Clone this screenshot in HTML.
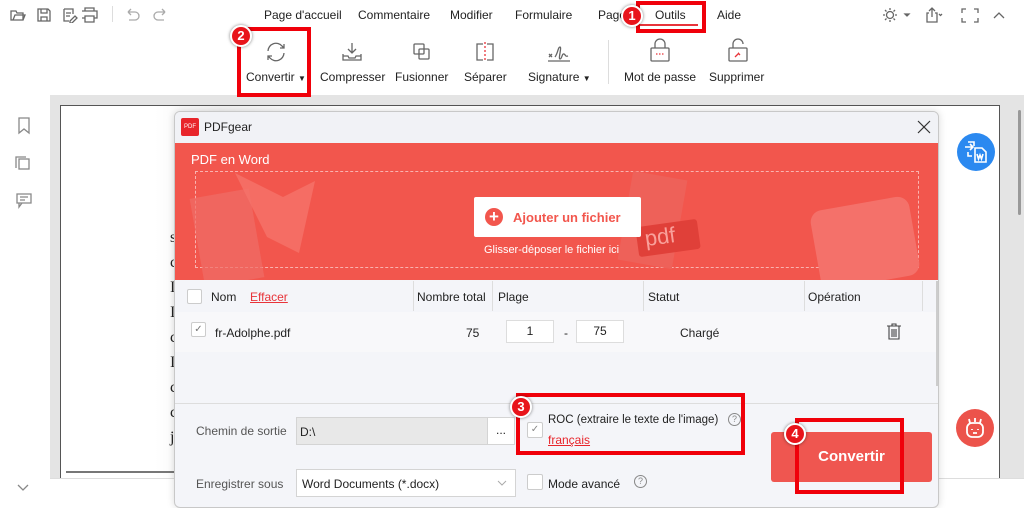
<!DOCTYPE html>
<html><head><meta charset="utf-8"><style>
*{box-sizing:border-box;margin:0;padding:0}
body{width:1024px;height:508px;overflow:hidden;position:relative;background:#e4e4e4;font-family:"Liberation Sans",sans-serif;font-size:12px;color:#222}
.a{position:absolute}
.top{left:0;top:0;width:1024px;height:95px;background:#fff}
.menu span{position:absolute;top:8px;font-size:12px}
.tool{position:absolute;top:70px;font-size:12px;color:#222}
.red{position:absolute;border:4px solid #f0000a}
.badge{position:absolute;width:22px;height:22px;border-radius:50%;background:#e8141b;border:2px solid #fff;box-shadow:0 0 3px rgba(0,0,0,.5);color:#fff;font-weight:bold;font-size:13px;text-align:center;line-height:18px}
.ic{position:absolute;stroke:#666;fill:none;stroke-width:1.3}
.chk{position:absolute;width:15px;height:15px;border:1px solid #ccc;background:#fff;border-radius:2px}
</style></head><body>
<div class="a top"></div>
<svg class="ic" style="left:10px;top:7px" width="90" height="16" viewBox="0 0 90 16">
<path d="M1 4h5l1 2h6v7H1z M3 13l2-5h10l-2 5"/>
<path d="M28 2h10l2 2v10H28z M31 2v4h6V2 M31 14v-4h6v4"/>
<path d="M54 2h9v5 M54 2v12h5 M56 6h5 M56 9h4 M60 14l5-5 2 2-5 5h-2z"/>
<path d="M84 4V1h-9v3 M72 4h15v7h-3 M75 11h-3 M75 9h9v6h-9z"/>
</svg>
<div class="a" style="left:112px;top:6px;width:1px;height:16px;background:#ddd"></div>
<svg class="ic" style="left:124px;top:7px;stroke:#aaa" width="45" height="16" viewBox="0 0 45 16"><path d="M4 5h7a4 4 0 0 1 0 8H5 M4 5l3-3 M4 5l3 3"/><path d="M41 5h-7a4 4 0 0 0 0 8h6 M41 5l-3-3 M41 5l-3 3"/></svg>
<div class="menu">
<span style="left:264px">Page d'accueil</span><span style="left:358px">Commentaire</span><span style="left:450px">Modifier</span><span style="left:515px">Formulaire</span><span style="left:598px">Page</span><span style="left:655px">Outils</span><span style="left:717px">Aide</span>
</div>
<div class="a" style="left:640px;top:24px;width:58px;height:2px;background:#e8343a"></div>
<svg class="ic" style="left:880px;top:6px" width="130" height="18" viewBox="0 0 130 18">
<circle cx="10" cy="9" r="3.5"/><path d="M10 2v2M10 14v2M3 9h2M15 9h2M5 4l1.5 1.5M13.5 12.5L15 14M5 14l1.5-1.5M13.5 5.5L15 4"/>
<path d="M25 8l2 2 2-2z" fill="#666"/>
<path d="M49 7h-2v9h10V7h-2 M52 11V2 M49 5l3-3 3 3"/><path d="M59 8l1.5 1.5L62 8"/>
<path d="M82 7V3h4 M94 3h4v4 M98 12v4h-4 M86 16h-4v-4"/>
<path d="M114 12l5-5 5 5"/>
</svg>
<svg class="ic" style="left:264px;top:40px" width="24" height="24" viewBox="0 0 24 24"><path d="M4 11a8 8 0 0 1 14-5l2 2 M20 4v4h-4 M20 13a8 8 0 0 1-14 5l-2-2 M4 20v-4h4"/></svg>
<svg class="ic" style="left:340px;top:40px" width="24" height="24" viewBox="0 0 24 24"><path d="M12 3v10 M8 9l4 4 4-4 M3 14v6h18v-6 M3 16h5l1 2h6l1-2h5"/></svg>
<svg class="ic" style="left:410px;top:40px" width="24" height="24" viewBox="0 0 24 24"><rect x="4" y="4" width="10" height="10" rx="1"/><rect x="9" y="9" width="10" height="10" rx="1"/></svg>
<svg class="ic" style="left:473px;top:40px" width="24" height="24" viewBox="0 0 24 24"><path d="M10 4H4v16h6 M14 4h6v16h-6"/><path d="M12 2v20" stroke="#e8343a" stroke-dasharray="2 2"/></svg>
<svg class="ic" style="left:546px;top:40px" width="26" height="24" viewBox="0 0 26 24"><path d="M3 14l3 3 M6 14l-3 3 M9 17c3-4 3-10 5-10s-2 12 0 12 2-6 4-5 1 3 4 2 M2 21h22"/></svg>
<div class="a" style="left:608px;top:40px;width:1px;height:44px;background:#ddd"></div>
<svg class="ic" style="left:648px;top:38px" width="24" height="26" viewBox="0 0 24 26"><path d="M7 10V6a5 5 0 0 1 10 0v4"/><rect x="3" y="10" width="18" height="13" rx="1"/><path d="M8 16h8" stroke="#e8343a" stroke-dasharray="1.5 1.5"/></svg>
<svg class="ic" style="left:726px;top:38px" width="24" height="26" viewBox="0 0 24 26"><path d="M7 10V6a5 5 0 0 1 10 0"/><rect x="3" y="10" width="18" height="13" rx="1"/><path d="M9 19l4-4 M12 15l2 2" stroke="#e8343a"/></svg>
<span class="tool" style="left:246px">Convertir <span style="font-size:8px">▼</span></span>
<span class="tool" style="left:320px">Compresser</span>
<span class="tool" style="left:395px">Fusionner</span>
<span class="tool" style="left:464px">Séparer</span>
<span class="tool" style="left:528px">Signature <span style="font-size:8px">▼</span></span>
<span class="tool" style="left:624px">Mot de passe</span>
<span class="tool" style="left:709px">Supprimer</span>
<div class="a" style="left:0;top:95px;width:50px;height:413px;background:#fff"></div>
<svg class="ic" style="left:14px;top:115px;stroke:#888" width="24" height="100" viewBox="0 0 24 100"><path d="M5 3h10v15l-5-4-5 4z"/><rect x="5" y="44" width="10" height="10"/><path d="M2 53V42h10"/><path d="M3 88h14v-9H3v9h2v4l3-4 M6 82h8 M6 85h5"/></svg>
<svg class="ic" style="left:17px;top:484px;stroke:#888" width="12" height="8" viewBox="0 0 12 8"><path d="M1 1l5 5 5-5"/></svg>
<div class="a" style="left:60px;top:105px;width:940px;height:375px;background:linear-gradient(90deg,#fff 0,#fff 10%,#f2f2f2 17%,#fff 30%,#fff 100%);border:1.5px solid #555;border-bottom:none"></div>
<div class="a" style="left:170px;top:225px;font-family:'Liberation Serif',serif;font-size:16px;line-height:25px;color:#222">s<br>c<br>I<br>I<br>c<br>I<br>c<br>c<br>j</div>
<div class="a" style="left:66px;top:471px;width:870px;height:2px;background:#777"></div>
<div class="a" style="left:50px;top:478px;width:974px;height:30px;background:#fff;border-top:1px solid #ddd"></div>
<div class="a" style="left:1018px;top:110px;width:3px;height:105px;background:#999;border-radius:2px"></div>
<div class="a" style="left:957px;top:133px;width:38px;height:38px;border-radius:50%;background:#2b89f0"></div>
<svg class="a" style="left:960px;top:136px" width="32" height="32" viewBox="0 0 32 32" fill="none" stroke="#fff" stroke-width="1.6"><path d="M5 11h8 M10 8l3 3-3 3 M8 6h6v4 M8 16v4h4"/><path d="M15 12h7l4 4v10H15z"/><path d="M17 18l1.5 5 1.5-4 1.5 4 1.5-5"/></svg>
<div class="a" style="left:956px;top:409px;width:38px;height:38px;border-radius:50%;background:#ec534b"></div>
<svg class="a" style="left:959px;top:412px" width="32" height="32" viewBox="0 0 32 32" fill="none" stroke="#fff" stroke-width="1.8"><rect x="8" y="11" width="16" height="14" rx="5"/><path d="M11 11l-1-4 M21 11l1-4 M16 10V6 M13 17v1 M19 17v1 M14 21h4"/></svg>
<div class="a" style="left:174px;top:111px;width:765px;height:397px;background:#f4f5f9;border:1px solid #c8c8c8;border-radius:6px;overflow:hidden;box-shadow:0 0 8px rgba(0,0,0,.15)">
 <div class="a" style="left:0;top:0;width:765px;height:31px;background:#f1f2f6"></div>
 <div class="a" style="left:6px;top:6px;width:18px;height:18px;background:#e8252b;border-radius:2px;color:#fff;font-size:6px;line-height:18px;text-align:center">PDF</div>
 <div class="a" style="left:29px;top:8px;font-size:12px">PDFgear</div>
 <svg class="a" style="left:742px;top:8px" width="14" height="14" viewBox="0 0 14 14" stroke="#333" stroke-width="1.2"><path d="M1 1l12 12M13 1L1 13"/></svg>
 <div class="a" style="left:0;top:31px;width:765px;height:137px;background:#f2564d;overflow:hidden">
  <div class="a" style="left:16px;top:9px;color:#fff;font-size:13px">PDF en Word</div>
  <div class="a" style="left:20px;top:28px;width:724px;height:97px;border:1px dashed rgba(255,255,255,.55)"></div>
  <div class="a" style="left:22px;top:50px;width:60px;height:90px;background:#f06e66;transform:rotate(-10deg);opacity:.7"></div>
  <div class="a" style="left:60px;top:30px;width:80px;height:80px;background:#f5736a;clip-path:polygon(0 0,60% 30%,100% 10%,80% 100%,40% 80%);opacity:.8"></div>
  <div class="a" style="left:450px;top:32px;width:55px;height:90px;background:#ee6159;transform:rotate(10deg)"></div>
  <div class="a" style="left:462px;top:80px;width:62px;height:30px;background:#e04039;border-radius:3px;color:#f9a09a;font-size:22px;transform:rotate(-8deg);padding-left:8px">pdf</div>
  <div class="a" style="left:640px;top:60px;width:100px;height:80px;background:#f4716a;border-radius:12px;transform:rotate(-10deg)"></div>
  <div class="a" style="left:299px;top:54px;width:167px;height:40px;background:#fff;border-radius:2px"></div>
  <div class="a" style="left:310px;top:65px;width:18px;height:18px;border-radius:50%;background:#f2564d;color:#fff;font-size:17px;line-height:17px;text-align:center;font-weight:bold">+</div>
  <div class="a" style="left:338px;top:67px;color:#f2564d;font-weight:bold;font-size:13px;white-space:nowrap">Ajouter un fichier</div>
  <div class="a" style="left:309px;top:101px;color:#fff;font-size:11px;white-space:nowrap">Glisser-déposer le fichier ici</div>
 </div>
 <div class="a" style="left:0;top:169px;width:765px;height:32px;background:#f4f5f9;border-bottom:1px solid #e8e8e8"></div>
 <div class="chk" style="left:12px;top:177px"></div>
 <div class="a" style="left:36px;top:178px">Nom</div>
 <div class="a" style="left:75px;top:178px;color:#e8343a;text-decoration:underline">Effacer</div>
 <div class="a" style="left:238px;top:169px;width:1px;height:30px;background:#ddd"></div>
 <div class="a" style="left:242px;top:178px">Nombre total</div>
 <div class="a" style="left:317px;top:169px;width:1px;height:30px;background:#ddd"></div>
 <div class="a" style="left:323px;top:178px">Plage</div>
 <div class="a" style="left:468px;top:169px;width:1px;height:30px;background:#ddd"></div>
 <div class="a" style="left:473px;top:178px">Statut</div>
 <div class="a" style="left:629px;top:169px;width:1px;height:30px;background:#ddd"></div>
 <div class="a" style="left:633px;top:178px">Opération</div>
 <div class="a" style="left:747px;top:169px;width:1px;height:30px;background:#ddd"></div>
 <div class="a" style="left:0;top:200px;width:765px;height:40px;background:#f8f8fa"></div>
 <div class="chk" style="left:16px;top:210px;font-size:10px;color:#777;line-height:13px;text-align:center">✓</div>
 <div class="a" style="left:40px;top:214px">fr-Adolphe.pdf</div>
 <div class="a" style="left:291px;top:214px">75</div>
 <div class="a" style="left:331px;top:208px;width:48px;height:23px;background:#fff;border:1px solid #ddd;text-align:center;line-height:21px">1</div>
 <div class="a" style="left:389px;top:214px">-</div>
 <div class="a" style="left:401px;top:208px;width:48px;height:23px;background:#fff;border:1px solid #ddd;text-align:center;line-height:21px">75</div>
 <div class="a" style="left:505px;top:214px">Chargé</div>
 <svg class="a" style="left:711px;top:211px" width="16" height="17" viewBox="0 0 16 17" fill="none" stroke="#444" stroke-width="1.1"><path d="M1 3h14 M6 3V1h4v2 M3 3v13h10V3 M6 6v8 M8 6v8 M10 6v8"/></svg>
 <div class="a" style="left:761px;top:169px;width:2px;height:105px;background:#ccc"></div>
 <div class="a" style="left:0;top:291px;width:765px;height:1px;background:#ddd"></div>
 <div class="a" style="left:21px;top:312px;color:#555">Chemin de sortie</div>
 <div class="a" style="left:121px;top:305px;width:192px;height:28px;background:#e8e8e8;border:1px solid #d4d4d4;padding:7px 3px">D:\</div>
 <div class="a" style="left:312px;top:305px;width:28px;height:28px;background:#fff;border:1px solid #d4d4d4;text-align:center;line-height:24px">...</div>
 <div class="chk" style="left:352px;top:310px;width:16px;height:16px;color:#888;font-size:10px;text-align:center;line-height:14px">✓</div>
 <div class="a" style="left:373px;top:302px;color:#222;font-size:11.5px;white-space:nowrap">ROC (extraire le texte de l'image)</div>
 <div class="a" style="left:553px;top:301px;width:13px;height:13px;border:1px solid #888;border-radius:50%;font-size:9px;text-align:center;line-height:11px;color:#888">?</div>
 <div class="a" style="left:373px;top:321px;color:#e8252b;text-decoration:underline">français</div>
 <div class="a" style="left:21px;top:365px;color:#555">Enregistrer sous</div>
 <div class="a" style="left:121px;top:357px;width:220px;height:28px;background:#fff;border:1px solid #d4d4d4;padding:7px 5px">Word Documents (*.docx)</div>
 <svg class="a" style="left:322px;top:368px" width="10" height="6" viewBox="0 0 10 6" fill="none" stroke="#aaa"><path d="M1 1l4 4 4-4"/></svg>
 <div class="chk" style="left:352px;top:362px;width:16px;height:16px"></div>
 <div class="a" style="left:373px;top:365px">Mode avancé</div>
 <div class="a" style="left:459px;top:363px;width:13px;height:13px;border:1px solid #888;border-radius:50%;font-size:9px;text-align:center;line-height:11px;color:#888">?</div>
 <div class="a" style="left:596px;top:320px;width:161px;height:50px;background:#ef5650;border-radius:3px;color:#fff;font-weight:bold;font-size:15px;text-align:center;line-height:50px">Convertir</div>
</div>
<div class="red" style="left:636px;top:1px;width:70px;height:32px"></div>
<div class="red" style="left:237px;top:27px;width:74px;height:70px"></div>
<div class="red" style="left:516px;top:393px;width:229px;height:62px"></div>
<div class="red" style="left:795px;top:418px;width:109px;height:76px"></div>
<div class="badge" style="left:621px;top:5px">1</div>
<div class="badge" style="left:230px;top:25px">2</div>
<div class="badge" style="left:510px;top:396px">3</div>
<div class="badge" style="left:784px;top:423px">4</div>
</body></html>
